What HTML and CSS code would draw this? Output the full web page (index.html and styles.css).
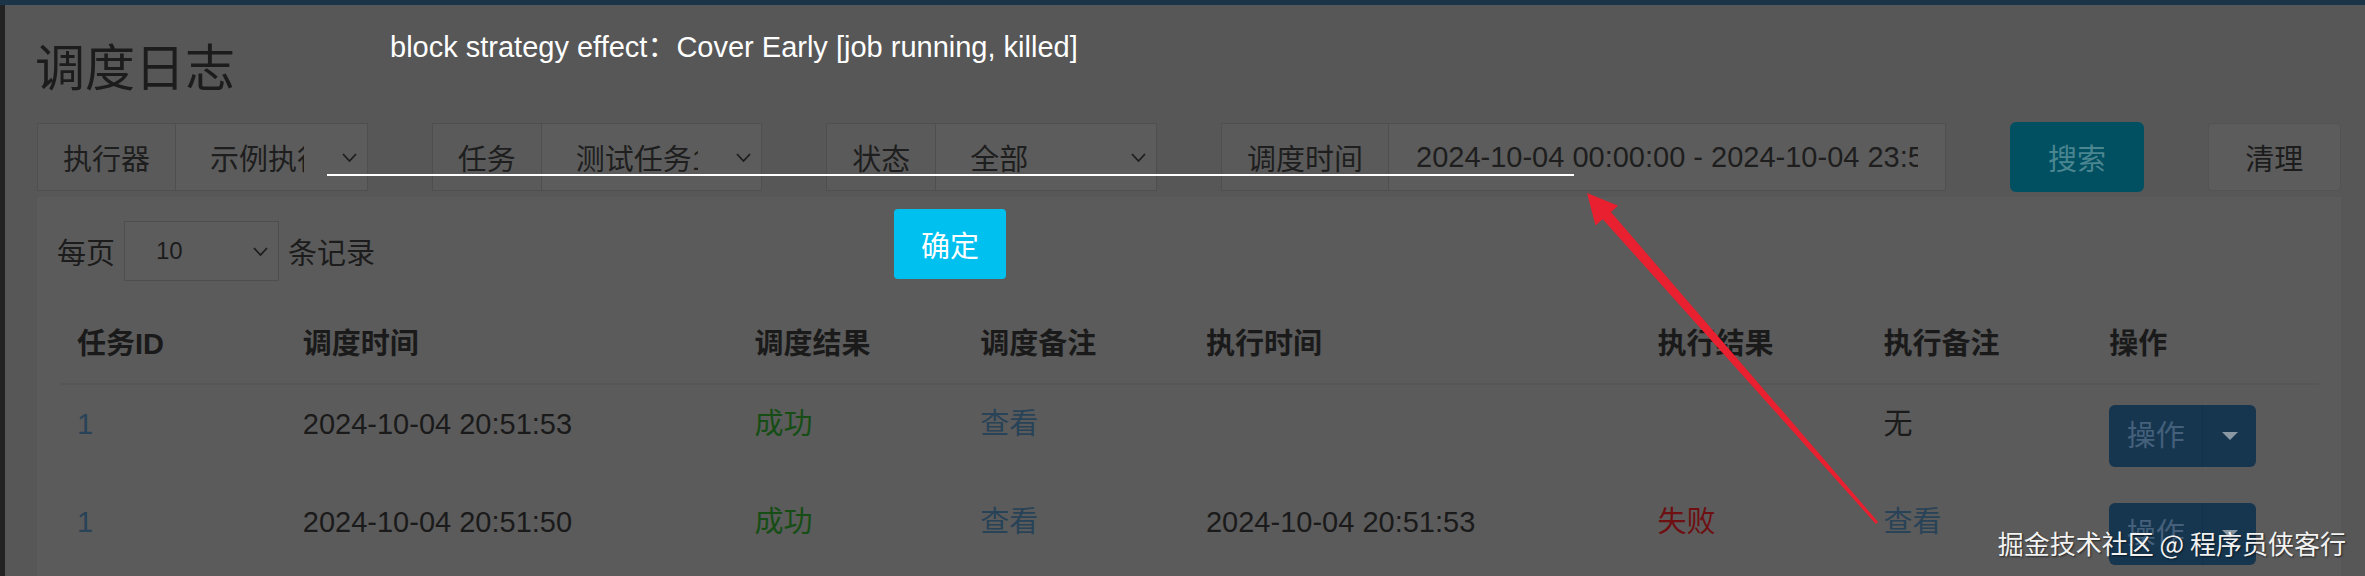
FILE: index.html
```html
<!DOCTYPE html>
<html lang="zh-CN">
<head>
<meta charset="utf-8">
<title>调度日志</title>
<link rel="stylesheet" href="styles.css">
</head>
<body>
<div class="topbar"></div>
<div class="layout">
  <aside class="sidebar-edge"></aside>
  <main class="content">
    <h1 class="title">调度日志</h1>
    <div class="filters">
      <div class="cell">
        <div class="group">
          <span class="addon">执行器</span>
          <div class="select"><span class="val">示例执行器</span><svg class="chev" viewBox="0 0 15 9"><polyline points="1,1 7.5,8 14,1"/></svg></div>
        </div>
      </div>
      <div class="cell">
        <div class="group">
          <span class="addon">任务</span>
          <div class="select"><span class="val">测试任务1</span><svg class="chev" viewBox="0 0 15 9"><polyline points="1,1 7.5,8 14,1"/></svg></div>
        </div>
      </div>
      <div class="cell">
        <div class="group">
          <span class="addon">状态</span>
          <div class="select"><span class="val">全部</span><svg class="chev" viewBox="0 0 15 9"><polyline points="1,1 7.5,8 14,1"/></svg></div>
        </div>
      </div>
      <div class="cell">
        <div class="group">
          <span class="addon">调度时间</span>
          <div class="input"><span class="val">2024-10-04 00:00:00 - 2024-10-04 23:59:59</span></div>
        </div>
      </div>
      <div class="cell"><div class="btn-search">搜索</div></div>
      <div class="cell"><div class="btn-clear">清理</div></div>
    </div>
    <section class="box">
      <div class="length">
        <span class="cjk">每页</span>
        <div class="select-sm"><span class="val-sm">10</span><svg class="chev" viewBox="0 0 15 9"><polyline points="1,1 7.5,8 14,1"/></svg></div>
        <span class="cjk">条记录</span>
      </div>
      <table class="log">
        <colgroup>
          <col class="c1"><col class="c2"><col class="c1"><col class="c1"><col class="c2"><col class="c1"><col class="c1"><col class="c1">
        </colgroup>
        <thead>
          <tr><th>任务ID</th><th>调度时间</th><th>调度结果</th><th>调度备注</th><th>执行时间</th><th>执行结果</th><th>执行备注</th><th>操作</th></tr>
        </thead>
        <tbody>
          <tr>
            <td><span class="link">1</span></td>
            <td>2024-10-04 20:51:53</td>
            <td><span class="ok">成功</span></td>
            <td><span class="link">查看</span></td>
            <td></td>
            <td></td>
            <td>无</td>
            <td><div class="op"><span class="op-main">操作</span><span class="op-caret"><i class="caret"></i></span></div></td>
          </tr>
          <tr>
            <td><span class="link">1</span></td>
            <td>2024-10-04 20:51:50</td>
            <td><span class="ok">成功</span></td>
            <td><span class="link">查看</span></td>
            <td>2024-10-04 20:51:53</td>
            <td><span class="fail">失败</span></td>
            <td><span class="link">查看</span></td>
            <td><div class="op"><span class="op-main">操作</span><span class="op-caret"><i class="caret"></i></span></div></td>
          </tr>
        </tbody>
      </table>
    </section>
  </main>
</div>

<div class="layer">
  <div class="layer-msg">block strategy effect：Cover Early [job running, killed]</div>
  <div class="layer-line"></div>
  <div class="layer-btn">确定</div>
</div>

<svg class="arrow" viewBox="0 0 2365 576" width="2365" height="576">
  <polygon points="1587,193 1618.1,205.7 1610.9,212.0 1878.1,522.0 1875.9,524.0 1602.7,219.2 1595.5,225.5"/>
</svg>

<div class="watermark">掘金技术社区 @ 程序员侠客行</div>
</body>
</html>
```

FILE: styles.css
```css
html, body {
  margin: 0;
  padding: 0;
}
body {
  width: 2365px;
  height: 576px;
  overflow: hidden;
  position: relative;
  background: #575757;
  font-family: "Liberation Sans", "Noto Sans CJK SC", sans-serif;
  font-size: 29px;
  color: #1c1c1c;
}
.topbar {
  height: 5px;
  background: #1b3447;
}
.layout {
  display: flex;
  height: 571px;
}
.sidebar-edge {
  flex: none;
  width: 5px;
  background: #232323;
}
.content {
  flex: none;
  width: 2304px;
  padding: 34px 0 0 32px;
}
.title {
  margin: 0 0 0 -2px;
  font-family: "Noto Sans CJK SC", sans-serif;
  font-size: 50px;
  line-height: 50px;
  font-weight: normal;
  color: #1c1c1c;
}

/* filter bar */
.filters {
  display: grid;
  grid-template-columns: 2fr 2fr 2fr 4fr 1fr 1fr;
  margin: 34px -32px 0;
  height: 68px;
}
.cell {
  padding: 0 32px;
  min-width: 0;
}
.group {
  display: flex;
  height: 68px;
}
.addon {
  flex: none;
  display: flex;
  align-items: center;
  padding: 0 25px;
  border: 1px solid #4f4f4f;
  background: #5a5a5a;
  font-family: "Noto Sans CJK SC", sans-serif;
  color: #1e1e1e;
  white-space: nowrap;
}
.select, .input {
  flex: 1;
  min-width: 0;
  display: flex;
  align-items: center;
  border: 1px solid #4f4f4f;
  border-left: 0;
  background: #5c5c5c;
  color: #1e1e1e;
}
.select {
  padding: 0 10px 0 34px;
}
.input {
  padding: 0 27px;
}
.val {
  flex: 1;
  min-width: 0;
  overflow: hidden;
  white-space: nowrap;
}
.chev {
  flex: none;
  width: 15px;
  height: 9px;
  margin-left: 38px;
  fill: none;
  stroke: #1e1e1e;
  stroke-width: 1.8;
}
.btn-search {
  height: 70px;
  margin-top: -1px;
  border-radius: 6px;
  background: #005061;
  color: #4a8590;
  display: flex;
  align-items: center;
  justify-content: center;
  font-family: "Noto Sans CJK SC", sans-serif;
}
.btn-clear {
  box-sizing: border-box;
  height: 68px;
  border: 1px solid #535353;
  border-radius: 4px;
  background: #5c5c5c;
  color: #1c1c1c;
  display: flex;
  align-items: center;
  justify-content: center;
  font-family: "Noto Sans CJK SC", sans-serif;
}

/* box */
.box {
  margin-top: 6px;
  height: 400px;
  background: #5b5b5b;
  padding: 24px 22px 0 24px;
}
.length {
  display: flex;
  align-items: center;
  height: 60px;
  margin-left: -4px;
}
.cjk {
  font-family: "Noto Sans CJK SC", sans-serif;
}
.select-sm {
  box-sizing: border-box;
  width: 155px;
  height: 60px;
  margin: 0 9px;
  display: flex;
  align-items: center;
  padding: 0 10px 0 31px;
  border: 1px solid #4e4e4e;
  background: #5c5c5c;
}
.select-sm .chev {
  margin-left: 0;
}
.val-sm {
  flex: 1;
  font-size: 24px;
}
.log {
  margin-top: 24px;
  width: 2258px;
  border-collapse: collapse;
  table-layout: fixed;
}
.c1 { width: 10%; }
.c2 { width: 20%; }
.log th {
  text-align: left;
  font-weight: bold;
  padding: 18px 16px;
  line-height: 42px;
  border-bottom: 2px solid #565656;
  color: #1a1a1a;
  white-space: nowrap;
}
.log td {
  padding: 18px 16px 16px;
  line-height: 42px;
  vertical-align: top;
  color: #1a1a1a;
  white-space: nowrap;
}
.link { color: #284257; }
.ok { color: #154d15; }
.fail { color: #6e0f12; }
.op {
  display: inline-flex;
  vertical-align: top;
  height: 62px;
  margin-top: 2px;
  border-radius: 6px;
  overflow: hidden;
  background: #163650;
}
.op-main {
  width: 93px;
  display: flex;
  align-items: center;
  justify-content: center;
  color: #45607a;
}
.op-caret {
  width: 53px;
  display: flex;
  align-items: center;
  justify-content: center;
  border-left: 1px solid #12304a;
}
.caret {
  width: 0;
  height: 0;
  border-left: 8px solid transparent;
  border-right: 8px solid transparent;
  border-top: 8px solid #8a98a4;
}

/* layer popup (over the dimmed page) */
.layer {
  position: absolute;
  inset: 0;
  pointer-events: none;
}
.layer-msg {
  position: absolute;
  left: 390px;
  top: 30px;
  color: #ffffff;
  font-size: 29px;
  line-height: 34px;
  white-space: nowrap;
}
.layer-line {
  position: absolute;
  left: 327px;
  top: 174px;
  width: 1247px;
  height: 2px;
  background: #ffffff;
}
.layer-btn {
  position: absolute;
  left: 894px;
  top: 209px;
  width: 112px;
  height: 70px;
  border-radius: 4px;
  background: #00c0ef;
  color: #ffffff;
  display: flex;
  align-items: center;
  justify-content: center;
  font-family: "Noto Sans CJK SC", sans-serif;
}
.arrow {
  position: absolute;
  left: 0;
  top: 0;
  fill: #e8202f;
  pointer-events: none;
}
.watermark {
  position: absolute;
  right: 19px;
  top: 530px;
  font-family: "Noto Sans CJK SC", sans-serif;
  font-size: 26px;
  line-height: 26px;
  color: #f2f2f2;
  text-shadow: 1px 1px 2px rgba(0, 0, 0, 0.6);
  white-space: nowrap;
}
```
